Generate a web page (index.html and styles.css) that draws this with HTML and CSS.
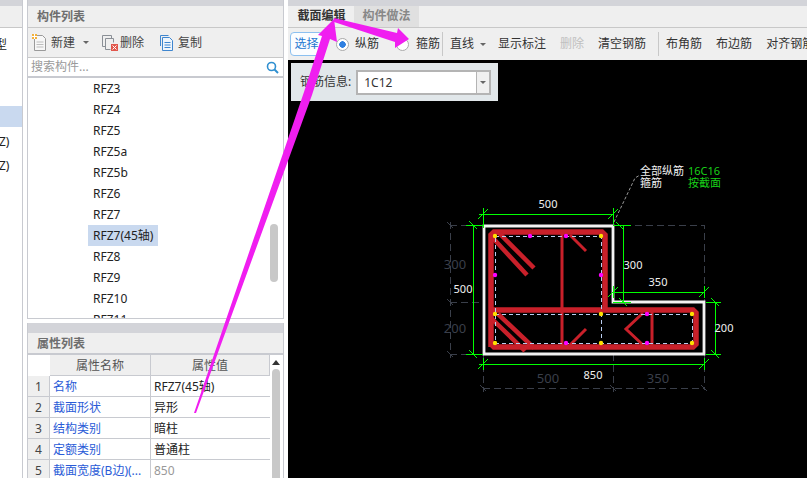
FILE: index.html
```html
<!DOCTYPE html>
<html lang="zh">
<head>
<meta charset="utf-8">
<title>截面编辑</title>
<link rel="stylesheet" href="styles.css">
</head>
<body>
<div class="app">
  <aside class="side">
    <div class="cap"></div>
    <div class="cap-title"></div>
    <div class="side-list">
      <div class="side-row side-first">型</div>
      <div class="side-row side-sel"></div>
      <div class="side-row side-z">Z)</div>
      <div class="side-row side-z2">Z)</div>
    </div>
  </aside>

  <section class="mid">
    <div class="panel list-panel">
      <div class="cap"></div>
      <div class="cap-title">构件列表</div>
      <div class="tools">
        <span class="tool tool-new">
          <svg class="ico" width="18" height="18" viewBox="0 0 18 18"><path d="M2.500 1.500h8l3 3v12h-11z" fill="#f7f7f7" stroke="#9a9a9a"/><path d="M4.500 8h7M4.500 10.500h7M4.500 13h7" stroke="#bdbdbd"/><rect x="0" y="0" width="5" height="5" fill="#f3b13c"/><path d="M0 2.500h5M2.500 0v5" stroke="#fff"/></svg>
          新建<i class="caret caret-new"></i>
        </span>
        <span class="tool tool-del">
          <svg class="ico" width="18" height="18" viewBox="0 0 18 18"><path d="M1.500 1.500h9v3M1.500 1.500v11h3" fill="none" stroke="#8a8f96"/><path d="M4.500 4.500h8v4M4.500 4.500v11h5" fill="none" stroke="#8a8f96"/><rect x="10" y="10" width="7" height="7" fill="#e2574c"/><path d="M11.500 11.500l4 4M15.500 11.500l-4 4" stroke="#fff"/></svg>
          删除
        </span>
        <span class="tool tool-copy">
          <svg class="ico" width="18" height="18" viewBox="0 0 18 18"><path d="M1.500 12V1.500h8" stroke="#3f86cf" fill="none"/><path d="M3.500 3.500h7l3 3v10h-10z" fill="#eef5fc" stroke="#3f86cf"/><path d="M5.500 8.500h6M5.500 11h6M5.500 13.500h6" stroke="#3f86cf"/></svg>
          复制
        </span>
      </div>
      <div class="search">
        <span>搜索构件...</span>
        <svg width="13" height="13" viewBox="0 0 13 13"><circle cx="5.500" cy="5.500" r="4" fill="none" stroke="#2f8fd0" stroke-width="1.600"/><path d="M8.500 8.500l3.500 3.500" stroke="#2f8fd0" stroke-width="2"/></svg>
      </div>
      <div class="items">
        <div class="item">RFZ3</div>
        <div class="item">RFZ4</div>
        <div class="item">RFZ5</div>
        <div class="item">RFZ5a</div>
        <div class="item">RFZ5b</div>
        <div class="item">RFZ6</div>
        <div class="item">RFZ7</div>
        <div class="item"><span class="item-sel">RFZ7(45轴)</span></div>
        <div class="item">RFZ8</div>
        <div class="item">RFZ9</div>
        <div class="item">RFZ10</div>
        <div class="item">RFZ11</div>
        <i class="thumb"></i>
      </div>
    </div>

    <div class="panel prop-panel">
      <div class="cap"></div>
      <div class="cap-title">属性列表</div>
      <div class="grid">
        <div class="cell h-blank"></div><div class="cell h">属性名称</div><div class="cell h">属性值</div>
        <div class="cell n">1</div><div class="cell k">名称</div><div class="cell v">RFZ7(45轴)</div>
        <div class="cell n">2</div><div class="cell k">截面形状</div><div class="cell v">异形</div>
        <div class="cell n">3</div><div class="cell k">结构类别</div><div class="cell v">暗柱</div>
        <div class="cell n">4</div><div class="cell k">定额类别</div><div class="cell v">普通柱</div>
        <div class="cell n">5</div><div class="cell k">截面宽度(B边)(...</div><div class="cell v dim">850</div>
        <div class="vbar"><i class="vbar-up"></i><i class="vbar-thumb"></i></div>
      </div>
    </div>
  </section>

  <main class="right">
    <div class="cap"></div>
    <div class="tabs">
      <span class="tab tab-on">截面编辑</span>
      <span class="tab">构件做法</span>
    </div>
    <div class="bar">
      <span class="btn-sel">选择</span>
      <span class="radio radio-on"></span><span class="b b-zong">纵筋</span>
      <span class="radio radio-two"></span><span class="b b-gu">箍筋</span>
      <i class="sep"></i>
      <span class="b b-line">直线</span><i class="caret caret-line"></i>
      <span class="b b-show">显示标注</span>
      <span class="b b-del">删除</span>
      <span class="b b-clear">清空钢筋</span>
      <i class="sep sep-two"></i>
      <span class="b b-corner">布角筋</span>
      <span class="b b-edge">布边筋</span>
      <span class="b b-align">对齐钢筋</span>
    </div>
    <div class="canvas">
      <div class="info">
        <span class="info-label">钢筋信息:</span>
        <span class="select"><span class="select-val">1C12</span><span class="select-btn"><i class="caret"></i></span></span>
      </div>
    </div>
  </main>
</div>

<svg class="cad" width="807" height="478" viewBox="0 0 807 478">
  <g fill="none" stroke="#3a3f4a" stroke-width="1" stroke-dasharray="7 4" shape-rendering="crispEdges">
    <path d="M450 225h33M450 302h33M450 354h33M450 222v136M613 225h91v165M483 388h221M483 354v38M613 354v38"/>
  </g>
  <path d="M447 222l6 6M447 299l6 6M447 351l6 6M480 385l6 6M610 385l6 6M701 385l6 6" stroke="#3a3f4a"/>
  <path d="M484 226h129v76h91v52H484z" fill="none" stroke="#f2f2f2" stroke-width="2.800"/>
  <g stroke="#0f0" stroke-width="1" fill="none" shape-rendering="crispEdges">
    <path d="M483 208v20M613 208v16M479 214h134"/>
    <path d="M466 225h17M473 225v129M466 354h17"/>
    <path d="M479 364h225M483 358v12M704 358v12"/>
    <path d="M613 225h18M623 225v77M613 292h91M613 286v12M704 286v12M613 302h18"/>
    <path d="M706 302h15M706 354h15M715 302v52"/>
  </g>
  <g stroke="#0f0" stroke-width="1" fill="none">
    <path d="M478 219l10-10M608 219l10-10M469 221l8 8M469 350l8 8M478 369l10-10M699 369l10-10M616 222l8 8M608 297l10-10M699 297l10-10M619 298l8 8M711 298l8 8M711 350l8 8"/>
  </g>
  <g fill="none" stroke="#c9202a">
    <path d="M491 347v-112l3-3h108l3 3v75M491 310h202l3 3v31l-3 3H494l-3-3z" stroke-width="5.500"/>
    <path d="M498 232l36 36M491 236l36 39M498 314l36 34M491 318l34 33" stroke-width="4.500"/>
    <path d="M562 232v115M652 310v37M570 235l16 16M570 345l16-16M643 313l-17 16 17 16" stroke-width="3"/>
  </g>
  <g fill="none" stroke="#b9cdf0" stroke-width="1" stroke-dasharray="4 3" shape-rendering="crispEdges">
    <path d="M495 236h106v78h91v29H495zM495 314h106v29"/>
  </g>
  <g fill="#ffe000">
    <circle cx="495" cy="236" r="2.200"/><circle cx="601" cy="236" r="2.200"/><circle cx="495" cy="314" r="2.200"/><circle cx="601" cy="314" r="2.200"/><circle cx="495" cy="343" r="2.200"/><circle cx="601" cy="343" r="2.200"/><circle cx="692" cy="314" r="2.200"/><circle cx="692" cy="343" r="2.200"/>
  </g>
  <g fill="#f0f">
    <circle cx="530" cy="236" r="2.200"/><circle cx="566" cy="236" r="2.200"/><circle cx="495" cy="275" r="2.200"/><circle cx="601" cy="275" r="2.200"/><circle cx="566" cy="343" r="2.200"/><circle cx="647" cy="314" r="2.200"/><circle cx="647" cy="343" r="2.200"/>
  </g>
  <path d="M614 222l21-44 5-3" fill="none" stroke="#9a9a9a" stroke-dasharray="3 2"/>
  <g class="cad-t">
    <text x="548" y="208">500</text>
    <text x="633" y="269">300</text>
    <text x="463" y="293">500</text>
    <text x="658" y="286">350</text>
    <text x="724" y="332">200</text>
    <text x="593" y="379">850</text>
  </g>
  <g class="cad-t cad-dim">
    <text x="455" y="269">300</text>
    <text x="455" y="333">200</text>
    <text x="548" y="383">500</text>
    <text x="658" y="383">350</text>
  </g>
  <g class="cad-l">
    <text x="640" y="175">全部纵筋</text>
    <text x="640" y="187">箍筋</text>
  </g>
  <g class="cad-l cad-g">
    <text x="688" y="175">16C16</text>
    <text x="688" y="187">按截面</text>
  </g>
</svg>

<svg class="arrows" width="807" height="478" viewBox="0 0 807 478">
  <path d="M194 413L304 92 322 36 318 35 334 19 337 42 330 39 312 95 196 413z" fill="#f01ef0"/>
  <path d="M334 18L397 33 398 28 409 39 395 48 395 42 334 22z" fill="#f01ef0"/>
</svg>
</body>
</html>
```
FILE: styles.css
```css
* { box-sizing: border-box; }
html, body { margin: 0; padding: 0; background: #fff; overflow: hidden; }
body { width: 807px; height: 478px; position: relative; font: 12px/1 "Noto Sans", "Noto Sans CJK SC", sans-serif; color: #222; }

.app { display: flex; width: 807px; height: 478px; }
.cap { height: 6px; background: #d3d4d9; }
.cap-title { height: 22px; background: #efefef; border-bottom: 1px solid #c8c8c8; padding-left: 9px; font-size: 12px; line-height: 21px; font-weight: 700; color: #6e6e6e; }

.side { width: 23px; flex: none; border-right: 1px solid #c8cad0; overflow: hidden; }
.side-list { position: relative; }
.side-row { height: 21px; line-height: 21px; white-space: nowrap; }
.side-first { margin-top: 6px; margin-left: -5px; color: #222; }
.side-sel { margin-top: 51px; background: #c9d9ef; }
.side-z { margin-top: 4px; margin-left: -1px; }
.side-z2 { margin-top: 3px; margin-left: -1px; }

.mid { width: 257px; margin-left: 4px; flex: none; display: flex; flex-direction: column; }
.panel { border: 1px solid #c8cad0; border-top: 0; overflow: hidden; }
.list-panel { height: 319px; }
.prop-panel { margin-top: 4px; flex: 1; border-bottom: 0; }

.tools { display: flex; align-items: center; height: 30px; background: #efefef; border-bottom: 1px solid #c8c8c8; color: #444; }
.tool { display: flex; align-items: center; gap: 1px; white-space: nowrap; }
.tool-new { margin-left: 4px; }
.tool-del { margin-left: 12px; }
.tool-copy { margin-left: 15px; }
.ico { flex: none; }
.caret { display: inline-block; flex: none; width: 0; height: 0; border: 3px solid transparent; border-top: 3px solid #666; border-bottom: 0; }
.caret-new { margin-left: 7px; }

.search { display: flex; justify-content: space-between; align-items: center; height: 20px; padding: 0 4px 0 3px; border-bottom: 2px solid #c8cad0; color: #9a9a9a; }

.items { position: relative; height: 240px; overflow: hidden; }
.item { height: 21px; line-height: 21px; padding-left: 65px; color: #222; }
.item-sel { display: inline-block; margin-left: -5px; padding: 0 5px; background: #c9d9ef; }
.thumb { position: absolute; left: 242px; top: 146px; width: 8px; height: 58px; border-radius: 4px; background: #c8c8c8; }

.grid { position: relative; display: grid; grid-template-columns: 22px 101px 119px; grid-auto-rows: 21px; }
.prop-panel .cap-title { height: 22px; border-bottom: 2px solid #c8cad0; }
.prop-panel .cap { height: 10px; }
.cell { border-bottom: 1px solid #c8cad0; border-right: 1px solid #c8cad0; line-height: 21px; white-space: nowrap; overflow: hidden; }
.h-blank { border: 0; background: #fff; }
.h { background: #efefef; text-align: center; color: #555; }
.n { background: #efefef; text-align: center; color: #444; }
.k { color: #2a5bd7; padding-left: 3px; }
.v { padding-left: 3px; color: #222; border-right: 0; }
.dim { color: #999; }
.vbar { position: absolute; left: 244px; top: 0; width: 8px; height: 140px; }
.vbar-up { position: absolute; left: 0; top: 5px; width: 0; height: 0; border: 4px solid transparent; border-bottom: 5px solid #333; border-top: 0; }
.vbar-thumb { position: absolute; left: 0; top: 14px; width: 8px; height: 130px; border-radius: 4px; background: #c8c8c8; }

.right { width: 519px; margin-left: 4px; flex: none; display: flex; flex-direction: column; }
.tabs { display: flex; height: 22px; background: #efefef; border-bottom: 1px solid #c8c8c8; padding-left: 1px; }
.tab { width: 65px; text-align: center; line-height: 20px; font-weight: 700; color: #888; background: #e0e0e0; }
.tab-on { color: #333; background: #efefef; }

.bar { display: flex; align-items: center; height: 32px; background: #efefef; white-space: nowrap; overflow: hidden; }
.b { flex: none; color: #333; }
.btn-sel { flex: none; width: 33px; height: 24px; margin-left: 2px; border: 1px solid #8cc0f0; border-radius: 4px; background: #fbfdff; color: #1f78d1; text-align: center; line-height: 22px; }
.radio { flex: none; width: 13px; height: 13px; border-radius: 50%; border: 1px solid #aaa; background: #fff; }
.radio-on { margin-left: 13px; background: radial-gradient(circle, #2f7fe0 0 3px, #fff 3.500px); }
.radio-two { margin-left: 17px; }
.b-zong { margin-left: 6px; }
.b-gu { margin-left: 7px; }
.sep { flex: none; width: 1px; height: 24px; background: #c8c8c8; margin-left: 2px; }
.b-line { margin-left: 7px; }
.caret-line { margin-left: 6px; }
.b-show { margin-left: 12px; }
.b-del { margin-left: 14px; color: #c0c0c0; }
.b-clear { margin-left: 14px; }
.sep-two { margin-left: 12px; }
.b-corner { margin-left: 7px; }
.b-edge { margin-left: 14px; }
.b-align { margin-left: 14px; }

.canvas { flex: 1; background: #000; padding: 3px 0 0 3px; }
.info { display: flex; align-items: center; width: 207px; height: 38px; padding-left: 9px; background: #e1e7ea; color: #333; }
.select { display: flex; margin-left: 5px; width: 135px; height: 25px; border: 2px solid #b4b4b4; background: #fff; }
.select-val { flex: 1; padding-left: 6px; line-height: 21px; color: #333; }
.select-btn { display: flex; align-items: center; justify-content: center; width: 13px; border-left: 1px solid #b4b4b4; background: #f0f0f0; }

.cad, .arrows { position: absolute; left: 0; top: 0; pointer-events: none; }
.cad-t text { font: 11px "Noto Sans", sans-serif; fill: #f0f0f0; text-anchor: middle; }
.cad-dim text { font-size: 13px; fill: #3a3f4a; }
.cad-l text { font: 11px "Noto Sans", "Noto Sans CJK SC", sans-serif; fill: #f0f0f0; }
.cad-g text { fill: #18d018; }
```
